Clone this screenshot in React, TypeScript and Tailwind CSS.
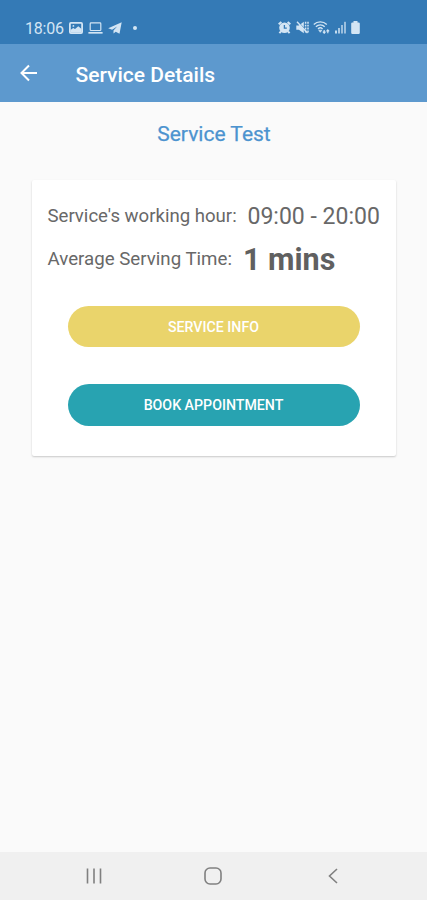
import type { ReactNode } from "react";

type IconProps = { className?: string };

function PictureIcon() {
  return (
    <svg viewBox="0 0 14 12" className="h-3 w-3.5" aria-hidden>
      <rect x="0.9" y="0.9" width="12.2" height="10.2" rx="1" fill="none" stroke="currentColor" strokeWidth="1.8" />
      <path d="M1.5 10.5V8l2.7-1.9 1.8 1L9.3 4.3 12.5 7v3.5z" fill="currentColor" />
      <circle cx="4.4" cy="3.9" r="0.9" fill="currentColor" />
    </svg>
  );
}

function LaptopIcon() {
  return (
    <svg viewBox="0 0 15 12" className="h-3 w-[15px]" fill="none" stroke="currentColor" aria-hidden>
      <rect x="2.2" y="0.9" width="10.6" height="7.6" rx="0.8" strokeWidth="1.2" />
      <path d="M0.4 10.8h14.2" strokeWidth="1.7" />
    </svg>
  );
}

function PlaneIcon() {
  return (
    <svg viewBox="0 0 14 12" className="h-3 w-3.5" fill="currentColor" aria-hidden>
      <path d="M13.7 0.3 0.2 6.2l3.9 1.5 5-3.3-3.6 4v3l2.2-1.7 3.8 2z" />
    </svg>
  );
}

function AlarmIcon() {
  return (
    <svg viewBox="0 0 13 13" className="size-[13px]" aria-hidden>
      <path d="M0.7 3.2 3.4 0.9M12.3 3.2 9.6 0.9M3 10.4l-1.6 1.8M10 10.4l1.6 1.8" stroke="currentColor" strokeWidth="2" />
      <circle cx="6.5" cy="6.7" r="5.3" fill="currentColor" />
      <path d="M6.4 4v3.1h2.4" fill="none" stroke="#347ab6" strokeWidth="1.3" />
    </svg>
  );
}

function MuteIcon() {
  return (
    <svg viewBox="0 0 13 13" className="size-[13px]" aria-hidden>
      <path d="M0.3 4.4h2.6L7.8 0.8v11.4L2.9 8.8H0.3z" fill="currentColor" />
      <path d="M2.2 0.8 9 8" stroke="#347ab6" strokeWidth="0.9" />
      <path d="M1 0.8 11.5 12" stroke="currentColor" strokeWidth="1.4" />
      <path d="M9.6 0.8v11.4M12 0.8v11.4" stroke="currentColor" strokeWidth="1.5" strokeDasharray="1.9 1" />
    </svg>
  );
}

function WifiIcon() {
  return (
    <svg viewBox="0 0 17 13" className="h-[13px] w-[17px]" fill="none" stroke="currentColor" aria-hidden>
      <path d="M0.8 3.4a9.5 9.5 0 0 1 13 0M2.9 5.7a6.3 6.3 0 0 1 8.8 0M5 7.9a3.3 3.3 0 0 1 4.6 0" strokeWidth="1.4" />
      <path d="M5.8 9.2 7.3 11.3 8.8 9.2z" fill="currentColor" strokeWidth="0.7" />
      <path d="M11.2 9v3M9.9 10.7l1.3 1.5 1.3-1.5M14.8 12.2v-3M13.5 10.3l1.3-1.5 1.3 1.5" strokeWidth="1.2" />
    </svg>
  );
}

function SignalIcon() {
  return (
    <svg viewBox="0 0 12 13" className="h-[13px] w-3" fill="currentColor" aria-hidden>
      <rect x="0" y="9.5" width="2" height="3" opacity="0.9" />
      <rect x="3" y="7" width="2" height="5.5" opacity="0.75" />
      <rect x="6" y="4" width="2" height="8.5" opacity="0.65" />
      <rect x="9" y="0.8" width="2" height="11.7" opacity="0.65" />
    </svg>
  );
}

function BatteryIcon() {
  return (
    <svg viewBox="0 0 9 13" className="h-[13px] w-[9px]" fill="currentColor" aria-hidden>
      <path d="M2.5 0h4v1.4h1.1A1.2 1.2 0 0 1 8.8 2.6v9.1a1.2 1.2 0 0 1-1.2 1.2H1.4a1.2 1.2 0 0 1-1.2-1.2V2.6a1.2 1.2 0 0 1 1.2-1.2h1.1z" />
    </svg>
  );
}

function BackArrow({ className }: IconProps) {
  return (
    <svg viewBox="0 0 18 18" className={className} fill="none" stroke="currentColor" strokeWidth="2" aria-hidden>
      <path d="M17 9H2M9 1.5 1.5 9 9 16.5" />
    </svg>
  );
}

function StatusBar() {
  return (
    <div className="flex h-11 items-start bg-[#347ab6] pl-[25px] pt-[21px] text-[#d3e5f4]">
      <span className="mt-px w-[44px] whitespace-nowrap text-[16px] leading-[14px] tracking-[-0.2px]">18:06</span>
      <div className="flex h-[13px] items-center gap-[5px]">
        <PictureIcon />
        <LaptopIcon />
        <PlaneIcon />
        <span className="ml-1.5 size-1 rounded-full bg-current" />
      </div>
      <div className="ml-[141px] flex h-[13px] items-center gap-[4.5px]">
        <AlarmIcon />
        <MuteIcon />
        <WifiIcon />
        <SignalIcon />
        <BatteryIcon />
      </div>
    </div>
  );
}

function PillButton({ className, children }: { className: string; children: ReactNode }) {
  return (
    <button
      type="button"
      className={`mx-auto block w-[292px] rounded-full pt-0.5 text-[14.2px] font-medium text-white ${className}`}
    >
      {children}
    </button>
  );
}

function NavigationBar() {
  return (
    <nav className="grid h-12 grid-cols-[187px_52px_187px] items-center justify-items-center bg-[#f0f0f0] text-[#808080]">
      <svg viewBox="0 0 16 16" className="size-4" stroke="currentColor" strokeWidth="1.6" aria-hidden>
        <path d="M1.5 0.5v15M8 0.5v15M14.5 0.5v15" />
      </svg>
      <svg viewBox="0 0 18 18" className="size-[18px]" fill="none" stroke="currentColor" strokeWidth="1.6" aria-hidden>
        <rect x="1" y="1" width="16" height="16" rx="5" />
      </svg>
      <svg viewBox="0 0 10 16" className="h-4 w-2.5" fill="none" stroke="currentColor" strokeWidth="1.6" aria-hidden>
        <path d="M9 1 1.5 8 9 15" />
      </svg>
    </nav>
  );
}

export default function App() {
  return (
    <div className="flex h-[900px] w-[427px] flex-col overflow-hidden bg-[#fafafa] font-[Roboto,sans-serif]">
      <StatusBar />
      <header className="flex h-[58px] items-center bg-[#5d99ce] pl-5 text-white">
        <BackArrow className="size-[18px]" />
        <h1 className="ml-[37.5px] mt-[5px] whitespace-nowrap text-[21px] font-medium">Service Details</h1>
      </header>

      <main className="flex-1">
        <h2 className="mt-[17px] pl-px text-center text-[21px] leading-[30px] text-[#4c93cf] [-webkit-text-stroke:0.25px_currentColor]">
          Service Test
        </h2>
        <section className="mx-auto mt-[31px] h-[276px] w-[364px] rounded-[2px] bg-white pt-[15px] text-[#686868] shadow-[0_1px_2px_rgba(0,0,0,0.2)]">
          <div className="flex h-[43px] items-center whitespace-nowrap pl-4">
            <span className="w-[200px] pt-px text-[18.6px]">Service's working hour:</span>
            <span className="pt-0.5 text-[23px]">09:00 - 20:00</span>
          </div>
          <div className="flex h-[43px] items-center whitespace-nowrap pl-4">
            <span className="w-[195.5px] text-[18.7px]">Average Serving Time:</span>
            <span className="text-[30.5px] font-bold text-[#606060]">1 mins</span>
          </div>
          <PillButton className="mt-[25px] h-[41px] bg-[#ead46b]">SERVICE INFO</PillButton>
          <PillButton className="mt-[37px] h-[42px] bg-[#28a3b1]">BOOK APPOINTMENT</PillButton>
        </section>
      </main>

      <NavigationBar />
    </div>
  );
}
